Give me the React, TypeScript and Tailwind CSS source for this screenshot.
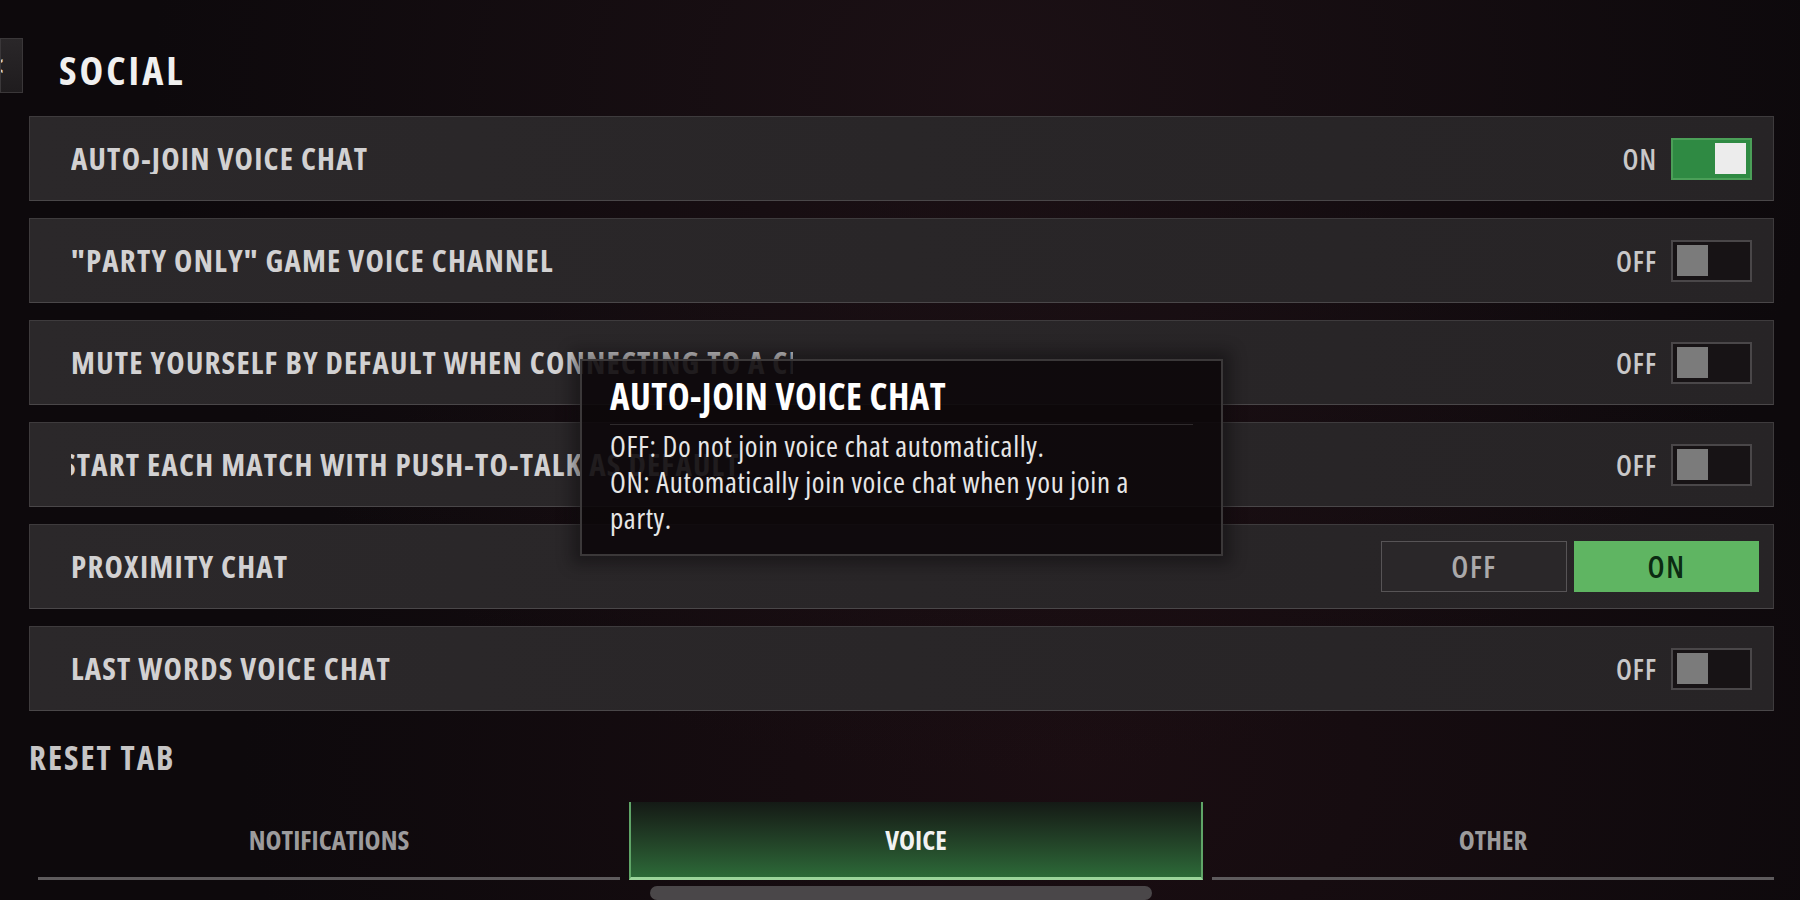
import React from "react";

const FONT = { fontFamily: '"Open Sans", "DejaVu Sans Condensed", sans-serif' };

function Toggle({ on }: { on: boolean }) {
  return (
    <div className="flex items-center gap-[14px]">
      <span className="text-[28px] font-semibold tracking-[1px] text-[#c9c8c9] leading-none">{on ? "ON" : "OFF"}</span>
      {on ? (
        <div className="w-[81px] h-[42px] bg-[#2f8a43] border-2 border-[#4b9f58] flex items-center justify-end pr-[4px]">
          <div className="w-[31px] h-[31px] bg-[#ececec]" />
        </div>
      ) : (
        <div className="w-[81px] h-[42px] bg-[#171315] border-2 border-[#4a4749] flex items-center pl-[4px]">
          <div className="w-[31px] h-[31px] bg-[#7b7b7b]" />
        </div>
      )}
    </div>
  );
}

function Row({ label, right, shift = 0 }: { label: string; right: React.ReactNode; shift?: number }) {
  return (
    <div className="h-[85px] flex items-center justify-between bg-gradient-to-r from-[#2b282a] to-[#272426] border border-[#3e3b3d] border-b-[#4a4749] pl-[41px] pr-[21px]">
      <div className="w-[722px] overflow-hidden">
        <div
          className={`whitespace-nowrap text-[31px] font-bold tracking-[1.2px] text-[#d2d1d2] leading-none ${shift ? "-ml-[9px]" : ""}`}
        >
          {label}
        </div>
      </div>
      {right}
    </div>
  );
}

export default function App() {
  return (
    <div
      className="relative w-[1800px] h-[900px] overflow-hidden bg-[#0d090c] [font-stretch:75%]"
      style={{
        ...FONT,
        backgroundImage:
          "radial-gradient(ellipse at 55% 10%, rgba(40,22,28,0.55), rgba(13,9,12,0) 60%), radial-gradient(ellipse at 60% 85%, rgba(40,18,24,0.5), rgba(13,9,12,0) 55%)",
      }}
    >
      {/* Header */}
      <div className="flex items-start gap-[36px] pt-[38px]">
        <div className="w-[23px] h-[55px] bg-gradient-to-b from-[#2a2729] to-[#1f1c1e] border border-[#3a3739] flex items-center overflow-hidden">
          <span className="text-[30px] font-semibold text-[#cfcfcf] -ml-[11px] leading-none">&lt;</span>
        </div>
        <div className="mt-[12px] text-[40px] font-bold text-[#f0f0f0] leading-none tracking-[3px]">SOCIAL</div>
      </div>

      {/* Rows */}
      <div className="flex flex-col gap-[17px] mt-[23px] ml-[29px] mr-[26px]">
        <Row label="AUTO-JOIN VOICE CHAT" right={<Toggle on />} />
        <Row label={'"PARTY ONLY" GAME VOICE CHANNEL'} right={<Toggle on={false} />} />
        <Row label="MUTE YOURSELF BY DEFAULT WHEN CONNECTING TO A CL" right={<Toggle on={false} />} />
        <Row label="START EACH MATCH WITH PUSH-TO-TALK AS DEFAULT" shift={1} right={<Toggle on={false} />} />
        <div className="h-[85px] flex items-center justify-between bg-gradient-to-r from-[#2b282a] to-[#272426] border border-[#3e3b3d] border-b-[#4a4749] pl-[41px] pr-[14px]">
          <div className="whitespace-nowrap text-[31px] font-bold tracking-[1.2px] text-[#d2d1d2] leading-none">PROXIMITY CHAT</div>
          <div className="flex gap-[7px]">
            <div className="w-[186px] h-[51px] bg-[#2a2729] border border-[#575456] flex items-center justify-center text-[30px] font-semibold tracking-[1.5px] text-[#aaa9aa] leading-none">
              OFF
            </div>
            <div className="w-[185px] h-[51px] bg-[#5fb562] flex items-center justify-center text-[30px] font-semibold tracking-[1.5px] text-[#0b2b12] leading-none">
              ON
            </div>
          </div>
        </div>
        <Row label="LAST WORDS VOICE CHAT" right={<Toggle on={false} />} />
      </div>

      {/* Reset tab */}
      <div className="mt-[30px] ml-[29px] text-[33px] font-bold tracking-[2px] text-[#c6c5c6] leading-none">RESET TAB</div>

      {/* Tabs */}
      <div className="flex gap-[9px] mt-[28px] ml-[38px] h-[78px]">
        <div className="w-[582px] flex items-center justify-center border-b-[3px] border-[#5e5b5d] text-[27px] font-bold text-[#9c9b9c] leading-none">
          NOTIFICATIONS
        </div>
        <div className="w-[574px] flex items-center justify-center border-b-[3px] border-[#9bd59b] border-x-2 border-x-[#5fa567] bg-gradient-to-b from-[#141a15] to-[#2c6a38] text-[27px] font-bold text-[#f2f2f2] leading-none">
          VOICE
        </div>
        <div className="w-[562px] flex items-center justify-center border-b-[3px] border-[#5e5b5d] text-[27px] font-bold text-[#9c9b9c] leading-none">
          OTHER
        </div>
      </div>

      {/* Scrollbar */}
      <div className="mt-[6px] ml-[650px] w-[502px] h-[14px] rounded-full bg-[#4a4749]" />

      {/* Tooltip */}
      <div className="absolute left-[580px] top-[359px] w-[643px] h-[197px] bg-[rgba(12,8,10,0.9)] border-2 border-[#3b3839] shadow-[0_0_14px_8px_rgba(12,8,10,0.45)] px-[28px] pt-[16px]">
        <div className="text-[37px] font-bold text-white leading-none tracking-[0.5px]">AUTO-JOIN VOICE CHAT</div>
        <div className="mt-[10px] h-[1px] bg-[#2e2a2c]" />
        <div className="mt-[3px] text-[29px] tracking-[0.6px] text-[#e6e6e6] leading-[36px] whitespace-nowrap">
          <div>OFF: Do not join voice chat automatically.</div>
          <div>ON: Automatically join voice chat when you join a</div>
          <div>party.</div>
        </div>
      </div>
    </div>
  );
}
